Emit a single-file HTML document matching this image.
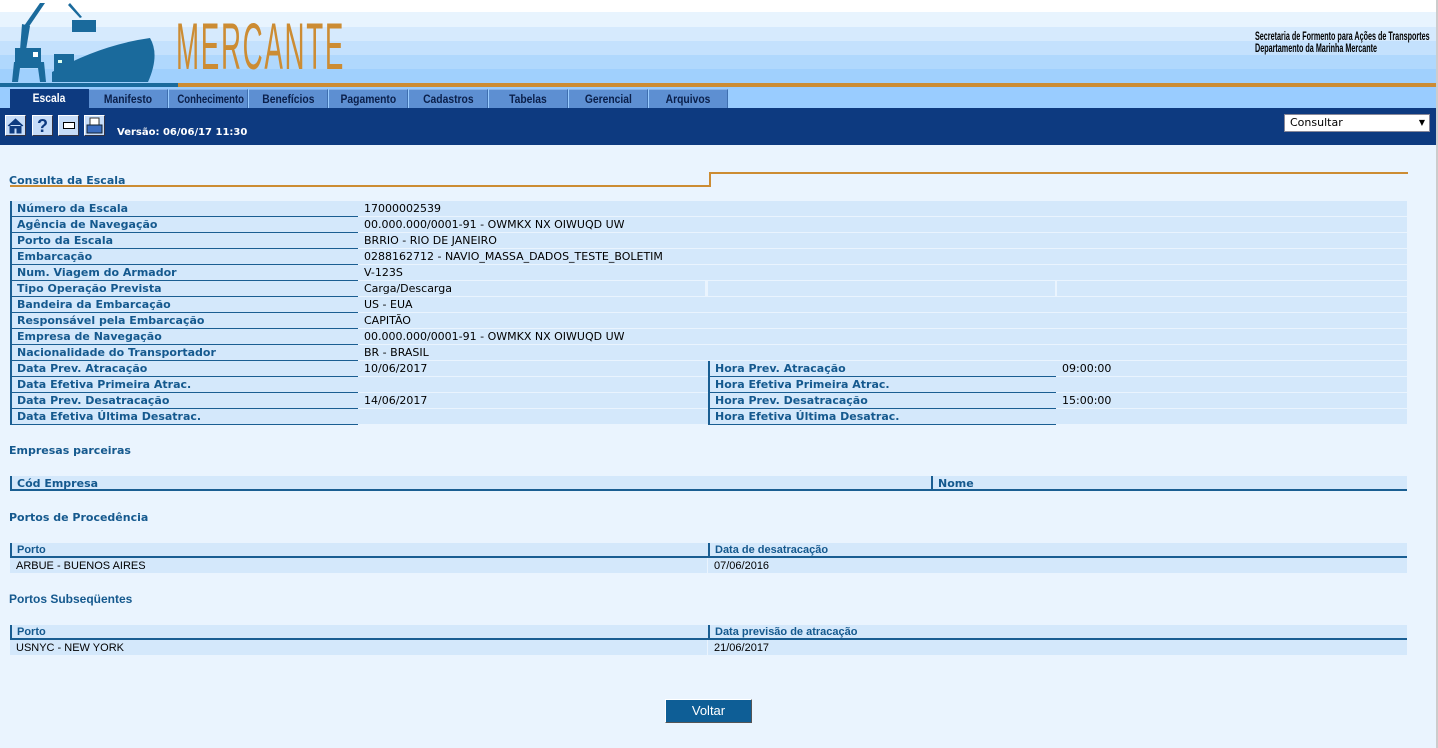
<!DOCTYPE html>
<html><head><meta charset="utf-8">
<style>
*{margin:0;padding:0;box-sizing:border-box}
body{width:1438px;height:748px;overflow:hidden;background:#eaf4fe;font-family:Verdana,"DejaVu Sans",sans-serif;position:relative}
.abs{position:absolute}
.hdr{left:0;top:0;width:1438px;height:87px;background:linear-gradient(#fff 0,#fff 12px,#e8f4fe 12px,#e8f4fe 27px,#d6eafd 27px,#d6eafd 41px,#c4e1fd 41px,#c4e1fd 55px,#b0d8fd 55px,#b0d8fd 69px,#a0d0fd 69px)}
.tab{position:absolute;top:89px;height:19px;width:79px;background:#5d8fd2;color:#0a1f4a;font:bold 12px "Liberation Sans",sans-serif;text-align:center;line-height:19px;border-top:1px solid #8ab4e8;border-right:1px solid #3f6fb0;white-space:nowrap;overflow:hidden}
.tab span{display:inline-block;transform:scaleX(0.86)}
.lbl{position:absolute;height:16px;background:#d4e8fb;border-left:2px solid #1a5e92;border-bottom:1px solid #1a5e92;color:#15598e;font-weight:bold;font-size:11px;line-height:16px;padding-left:5px}
.val{position:absolute;height:16px;background:#d4e8fb;border-bottom:1px solid #eaf4fe;font-size:11px;line-height:16px;padding-left:6px;color:#000}
.h{position:absolute;left:9px;color:#15598e;font-weight:bold;font-size:11px}
.th{position:absolute;height:15px;background:#d4e8fb;border-left:2px solid #1a5e92;border-bottom:2px solid #1a5e92;color:#15598e;font:bold 11px "Liberation Sans",sans-serif;line-height:15px;padding-left:5px}
.td{position:absolute;height:15px;background:#d4e8fb;font:11px "Liberation Sans",sans-serif;line-height:16px;padding-left:6px}
.ic{position:absolute;top:115px;width:21px;height:21px;background:#c6dcf8;border:1px solid #fff;border-right-color:#334;border-bottom-color:#334}
</style></head><body>
<div class="abs hdr"></div>
<svg class="abs" style="left:0;top:0" width="178" height="87" viewBox="0 0 178 87">
<g fill="#1a6a9c">
<path d="M40 3 L45 3 L28 28 L24 26 Z"/>
<path d="M22 24 L30 26 L26 50 L20 50 Z"/>
<rect x="15" y="48" width="26" height="14"/>
<path d="M14 62 L44 62 L46 82 L40 82 L38 68 L20 68 L18 82 L12 82 Z"/>
<path d="M70 3 L82 17 L80 18 L68 5 Z"/>
<rect x="72" y="20" width="24" height="12"/>
<path d="M52 72 Q100 45 150 38 Q160 55 148 82 L52 82 Z"/>
<rect x="54" y="54" width="20" height="18"/>
</g>
<rect x="33" y="52" width="5" height="5" fill="#fff"/>
<rect x="58" y="60" width="4" height="3" fill="#dfe"/>
<rect x="0" y="83" width="178" height="4" fill="#1a6a9c"/>
</svg>
<div class="abs" style="left:176px;top:13px;font:66px 'Liberation Sans',sans-serif;color:#cc8c33;letter-spacing:4px;transform:scaleX(0.42);transform-origin:left top;line-height:66px;white-space:nowrap">MERCANTE</div>
<div class="abs" style="left:1255px;top:30px;font:bold 12px 'Liberation Sans',sans-serif;line-height:12px;color:#000;white-space:nowrap;transform:scaleX(0.6);transform-origin:left top">Secretaria de Formento para Ações de Transportes<br>Departamento da Marinha Mercante</div>
<div class="abs" style="left:178px;top:83px;width:1260px;height:4px;background:#cc8c33"></div>
<div class="abs" style="left:0;top:87px;width:1438px;height:21px;background:#99ccff"></div>
<div class="tab" style="left:10px;background:#0d3a80;color:#fff;border:none"><span>Escala</span></div>
<div class="tab" style="left:89px"><span>Manifesto</span></div>
<div class="tab" style="left:169px"><span style="transform:scaleX(0.8)">Conhecimento</span></div>
<div class="tab" style="left:249px"><span>Benefícios</span></div>
<div class="tab" style="left:329px"><span>Pagamento</span></div>
<div class="tab" style="left:409px"><span>Cadastros</span></div>
<div class="tab" style="left:489px"><span>Tabelas</span></div>
<div class="tab" style="left:569px"><span>Gerencial</span></div>
<div class="tab" style="left:649px"><span>Arquivos</span></div>
<div class="abs" style="left:0;top:108px;width:1438px;height:37px;background:#0d3a80"></div>
<div class="ic" style="left:5px"><svg width="19" height="19"><path d="M2 10 L9.5 3 L17 10 M4 9 V17 H8 V12 H11 V17 H15 V9" fill="#0d3a80" stroke="#0d3a80"/></svg></div>
<div class="ic" style="left:32px;color:#0d3a80;font:bold 18px 'Liberation Sans';text-align:center;line-height:20px">?</div>
<div class="ic" style="left:58px"><div style="position:absolute;left:4px;top:6px;width:12px;height:7px;border:1px solid #000;background:#fff"></div></div>
<div class="ic" style="left:84px"><svg width="19" height="19"><rect x="5" y="2" width="9" height="7" fill="#fff" stroke="#333"/><rect x="2" y="9" width="15" height="8" fill="#3b6dc0" stroke="#123"/></svg></div>
<div class="abs" style="left:117px;top:127px;color:#fff;font-weight:bold;font-size:10px">Versão: 06/06/17 11:30</div>
<div class="abs" style="left:1284px;top:114px;width:146px;height:18px;background:#fff;border:1px solid #889;font-size:11px;line-height:16px;padding-left:5px">Consultar<span style="position:absolute;right:4px;top:0;font-size:8px">▼</span></div>

<div class="h" style="top:174px">Consulta da Escala</div>
<div class="abs" style="left:10px;top:185px;width:700px;height:2px;background:#cc8c33"></div>
<div class="abs" style="left:709px;top:172px;width:2px;height:15px;background:#cc8c33"></div>
<div class="abs" style="left:709px;top:172px;width:699px;height:2px;background:#cc8c33"></div>

<div class="lbl" style="left:10px;top:201px;width:348px">Número da Escala</div><div class="val" style="left:358px;top:201px;width:1049px">17000002539</div>
<div class="lbl" style="left:10px;top:217px;width:348px">Agência de Navegação</div><div class="val" style="left:358px;top:217px;width:1049px">00.000.000/0001-91 - OWMKX NX OIWUQD UW</div>
<div class="lbl" style="left:10px;top:233px;width:348px">Porto da Escala</div><div class="val" style="left:358px;top:233px;width:1049px">BRRIO - RIO DE JANEIRO</div>
<div class="lbl" style="left:10px;top:249px;width:348px">Embarcação</div><div class="val" style="left:358px;top:249px;width:1049px">0288162712 - NAVIO_MASSA_DADOS_TESTE_BOLETIM</div>
<div class="lbl" style="left:10px;top:265px;width:348px">Num. Viagem do Armador</div><div class="val" style="left:358px;top:265px;width:1049px">V-123S</div>
<div class="lbl" style="left:10px;top:281px;width:348px">Tipo Operação Prevista</div><div class="val" style="left:358px;top:281px;width:349px;border-right:2px solid #eaf4fe">Carga/Descarga</div><div class="val" style="left:708px;top:281px;width:349px;border-right:2px solid #eaf4fe"></div><div class="val" style="left:1057px;top:281px;width:350px"></div>
<div class="lbl" style="left:10px;top:297px;width:348px">Bandeira da Embarcação</div><div class="val" style="left:358px;top:297px;width:1049px">US - EUA</div>
<div class="lbl" style="left:10px;top:313px;width:348px">Responsável pela Embarcação</div><div class="val" style="left:358px;top:313px;width:1049px">CAPITÃO</div>
<div class="lbl" style="left:10px;top:329px;width:348px">Empresa de Navegação</div><div class="val" style="left:358px;top:329px;width:1049px">00.000.000/0001-91 - OWMKX NX OIWUQD UW</div>
<div class="lbl" style="left:10px;top:345px;width:348px">Nacionalidade do Transportador</div><div class="val" style="left:358px;top:345px;width:1049px">BR - BRASIL</div>
<div class="lbl" style="left:10px;top:361px;width:348px">Data Prev. Atracação</div><div class="val" style="left:358px;top:361px;width:350px">10/06/2017</div><div class="lbl" style="left:708px;top:361px;width:348px">Hora Prev. Atracação</div><div class="val" style="left:1056px;top:361px;width:351px">09:00:00</div>
<div class="lbl" style="left:10px;top:377px;width:348px">Data Efetiva Primeira Atrac.</div><div class="val" style="left:358px;top:377px;width:350px"></div><div class="lbl" style="left:708px;top:377px;width:348px">Hora Efetiva Primeira Atrac.</div><div class="val" style="left:1056px;top:377px;width:351px"></div>
<div class="lbl" style="left:10px;top:393px;width:348px">Data Prev. Desatracação</div><div class="val" style="left:358px;top:393px;width:350px">14/06/2017</div><div class="lbl" style="left:708px;top:393px;width:348px">Hora Prev. Desatracação</div><div class="val" style="left:1056px;top:393px;width:351px">15:00:00</div>
<div class="lbl" style="left:10px;top:409px;width:348px">Data Efetiva Última Desatrac.</div><div class="val" style="left:358px;top:409px;width:350px"></div><div class="lbl" style="left:708px;top:409px;width:348px">Hora Efetiva Última Desatrac.</div><div class="val" style="left:1056px;top:409px;width:351px"></div>

<div class="h" style="top:444px">Empresas parceiras</div>
<div class="th" style="left:10px;top:476px;width:921px;font-family:Verdana,'DejaVu Sans',sans-serif">Cód Empresa</div>
<div class="th" style="left:931px;top:476px;width:476px;font-family:Verdana,'DejaVu Sans',sans-serif">Nome</div>

<div class="h" style="top:511px">Portos de Procedência</div>
<div class="th" style="left:10px;top:543px;width:698px">Porto</div>
<div class="th" style="left:708px;top:543px;width:699px">Data de desatracação</div>
<div class="td" style="left:10px;top:558px;width:697px">ARBUE - BUENOS AIRES</div>
<div class="td" style="left:708px;top:558px;width:699px">07/06/2016</div>

<div class="h" style="top:592px;font:bold 12px 'Liberation Sans',sans-serif">Portos Subseqüentes</div>
<div class="th" style="left:10px;top:625px;width:698px">Porto</div>
<div class="th" style="left:708px;top:625px;width:699px">Data previsão de atracação</div>
<div class="td" style="left:10px;top:640px;width:697px">USNYC - NEW YORK</div>
<div class="td" style="left:708px;top:640px;width:699px">21/06/2017</div>

<div class="abs" style="left:665px;top:699px;width:87px;height:24px;background:#0e5e96;border:1px solid #fff;border-right-color:#555;border-bottom-color:#555;color:#fff;font:13px 'Liberation Sans',sans-serif;text-align:center;line-height:22px">Voltar</div>
<div class="abs" style="left:1436px;top:0;width:2px;height:748px;background:#ccc"></div>
</body></html>
